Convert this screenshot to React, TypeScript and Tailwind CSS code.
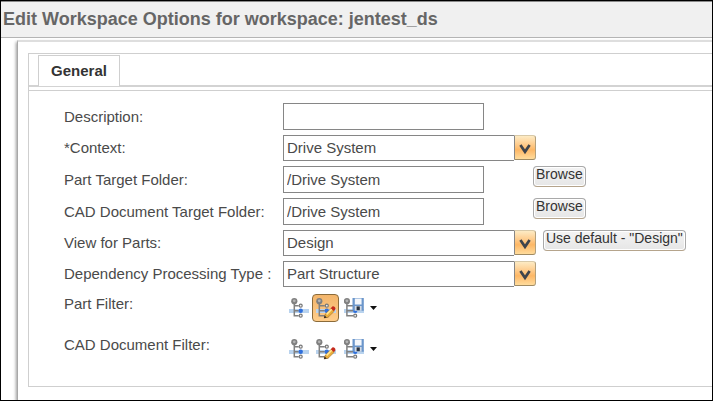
import React, { useState } from "react";

const inputClass =
  "h-[27px] w-[201px] border border-[#868686] bg-white pl-[3px] text-[15px] text-[#4a4a4a] outline-none";

const buttonClass =
  "h-[21px] rounded border border-[#a9a9a9] border-b-[#b5a48c] bg-linear-to-b from-[#f4f4f4] to-[#e6e6e6] px-[2px] text-[14px] leading-[15px] text-[#333] shadow-[inset_0_0_0_1px_#fff] pb-1 whitespace-nowrap";

type RowProps = {
  id: string;
  label: string;
  children: React.ReactNode;
};

const Row = ({ id, label, children }: RowProps) => (
  <div className="flex items-center">
    <label htmlFor={id} className="w-[219px] shrink-0 leading-5 whitespace-nowrap">
      {label}
    </label>
    <div className="flex items-start gap-[7px]">{children}</div>
  </div>
);

type SelectProps = {
  id: string;
  options: string[];
};

const Select = ({ id, options }: SelectProps) => {
  const [value, setValue] = useState<string>(options[0]);

  return (
    <div className="relative w-[253px]">
      <select
        id={id}
        value={value}
        onChange={(e) => setValue(e.target.value)}
        className="block h-[26px] w-full appearance-none border border-[#868686] bg-white pr-6 pl-[3px] text-[15px] text-[#4a4a4a] outline-none"
      >
        {options.map((option) => (
          <option key={option}>{option}</option>
        ))}
      </select>
      <span className="pointer-events-none absolute top-0 right-0 flex h-full w-[22px] bg-white">
        <span className="flex h-[25px] w-full items-center justify-center rounded-r-[3px] border border-l-[#868686] border-t-[#d8c9a8] border-r-[#b3a07c] border-b-[#a08a62] bg-linear-to-b from-[#fdebc4] via-[#fdb765] via-60% to-[#ffdc9c]">
          <svg width="12" height="12" viewBox="0 0 12 12" className="mt-[3px]">
            <path d="M1.4 2L6 8.8 10.6 2" fill="none" stroke="#3f444c" strokeWidth="2.7" />
          </svg>
        </span>
      </span>
    </div>
  );
};

const Tree = ({ x, nodeX }: { x: number; nodeX: number }) => (
  <g fill="none">
    <path d="M0 12h20v4H0z" fill="#b9d3ee" />
    <path d={`M${x} 7v11.7H${nodeX - 2}M${x} 8.7H${nodeX - 2}M${x} 13.7H${nodeX - 2}`} stroke="#808080" strokeWidth="1.5" />
    <circle cx={x} cy="4.2" r="3.1" fill="#808080" />
    <circle cx={x} cy="3.8" r="1.4" fill="#b4b4b4" />
    <circle cx={nodeX} cy="8.7" r="1.5" fill="#eee" stroke="#777" strokeWidth="1.2" />
    <circle cx={nodeX} cy="13.7" r="2.2" fill="#2f6fdc" />
    <circle cx={nodeX} cy="18.7" r="1.5" fill="#eee" stroke="#777" strokeWidth="1.2" />
  </g>
);

const FilterIcon = () => (
  <svg width="20" height="22" viewBox="0 0 20 22">
    <Tree x={5.3} nodeX={11.7} />
  </svg>
);

const EditFilterIcon = () => (
  <svg width="20" height="22" viewBox="0 0 20 22">
    <Tree x={3.3} nodeX={10.8} />
    <path d="M8.3 20.8l1-3.6 6.2-6.2 3 3-6.5 6.3z" fill="#e9ae3c" stroke="#a66d24" strokeWidth=".6" />
    <path d="M10.6 17.4l5.6-5.6" stroke="#ffe99a" strokeWidth="1.5" />
    <path d="M7.9 21.2l.8-2.8 2 2z" fill="#2b211b" />
    <path d="M14.8 11.2l1.6-1.6c1.4-1 3.8 1.4 2.8 2.8l-1.6 1.6z" fill="#c5291c" />
  </svg>
);

const SaveFilterIcon = () => (
  <svg width="22" height="22" viewBox="0 0 22 22">
    <Tree x={2.9} nodeX={11.2} />
    <path d="M8.5 1h11.3v12.7H9.7L8.5 12.5z" fill="#6b96cb" />
    <path d="M10.8 1.5h6.8v6h-6.8z" fill="#f4f7fb" />
    <path d="M10.8 9h6.8v4.7h-6.8z" fill="#d3dbe5" />
    <path d="M12.6 9.4h3.2v3.8h-3.2z" fill="#27303d" />
  </svg>
);

const actions = ["none", "edit"];

const FilterRow = ({ label, initial }: { label: string; initial: string }) => {
  const [active, setActive] = useState<string>(initial);

  return (
    <div role="group" aria-label={label} className="flex items-start">
      <span className="w-[219px] shrink-0 leading-5">{label}</span>
      <div className="flex h-7 items-center pl-[2px]">
        {actions.map((action) => (
          <button
            key={action}
            type="button"
            aria-label={action + " filter"}
            onClick={() => setActive(action)}
            className={
              active === action
                ? "flex h-7 w-[27px] items-center justify-center rounded border border-[#8b6b3a] bg-linear-to-b from-[#f3b56b] to-[#ffcd8a]"
                : "flex h-7 w-[27px] items-center justify-center"
            }
          >
            {action === "none" ? <FilterIcon /> : <EditFilterIcon />}
          </button>
        ))}
        <button
          type="button"
          aria-label="save filter"
          className="flex h-7 items-center gap-1 pl-[5px]"
        >
          <SaveFilterIcon />
          <svg width="7" height="4" viewBox="0 0 7 4">
            <path d="M0 0h7L3.5 4z" fill="#111" />
          </svg>
        </button>
      </div>
    </div>
  );
};

const App: React.FC = () => {
  const [description, setDescription] = useState<string>("");
  const [partFolder, setPartFolder] = useState<string>("/Drive System");
  const [cadFolder, setCadFolder] = useState<string>("/Drive System");

  return (
    <div className="flex min-h-screen flex-col overflow-hidden border border-black bg-white font-['Liberation_Sans',Arial,sans-serif] text-[15px] text-[#4a4a4a]">
      <header className="border-t border-b border-t-[#8a8a8a] border-b-[#b4b4b4] bg-[#f0f0f0] pl-[2px]">
        <h1 className="text-[18px] leading-[35px] font-bold text-[#666]">
          Edit Workspace Options for workspace: jentest_ds
        </h1>
      </header>

      <main className="mt-[2px] ml-4 flex-1 border-t-2 border-l border-t-[#dedede] border-l-[#a8a8a8] pt-[11px] pb-3 pl-[10px] shadow-[-1px_2px_3px_#999]">
        <div className="border-t border-b border-l border-[#cfcfcf]">
          <div role="tablist" className="flex h-[33px] border-b-2 border-[#d3d3d3] pt-px pl-[9px]">
            <button
              type="button"
              role="tab"
              aria-selected="true"
              className="-mb-px h-[31px] w-[82px] border border-b-0 border-[#cfcfcf] bg-white text-[15px] font-bold text-[#333]"
            >
              General
            </button>
          </div>

          <form
            onSubmit={(e) => e.preventDefault()}
            className="mt-[3px] border-t border-[#cfcfcf] pt-3 pb-[23px] pl-[35px]"
          >
            <div className="flex flex-col gap-[5px]">
              <Row id="description" label="Description:">
                <input
                  id="description"
                  type="text"
                  value={description}
                  onChange={(e) => setDescription(e.target.value)}
                  className={inputClass}
                />
              </Row>
              <Row id="context" label="*Context:">
                <Select id="context" options={["Drive System"]} />
              </Row>
              <Row id="part-folder" label="Part Target Folder:">
                <div className="w-[243px]">
                  <input
                    id="part-folder"
                    type="text"
                    value={partFolder}
                    onChange={(e) => setPartFolder(e.target.value)}
                    className={inputClass}
                  />
                </div>
                <button type="button" className={buttonClass}>
                  Browse
                </button>
              </Row>
              <Row id="cad-folder" label="CAD Document Target Folder:">
                <div className="w-[243px]">
                  <input
                    id="cad-folder"
                    type="text"
                    value={cadFolder}
                    onChange={(e) => setCadFolder(e.target.value)}
                    className={inputClass}
                  />
                </div>
                <button type="button" className={buttonClass}>
                  Browse
                </button>
              </Row>
              <Row id="view" label="View for Parts:">
                <Select id="view" options={["Design"]} />
                <button type="button" className={buttonClass}>
                  Use default - "Design"
                </button>
              </Row>
              <Row id="dependency" label="Dependency Processing Type :">
                <Select id="dependency" options={["Part Structure"]} />
              </Row>
            </div>

            <div className="mt-[7px] flex flex-col gap-[13px]">
              <FilterRow label="Part Filter:" initial="edit" />
              <FilterRow label="CAD Document Filter:" initial="" />
            </div>
          </form>
        </div>
      </main>
    </div>
  );
};

export default App;
